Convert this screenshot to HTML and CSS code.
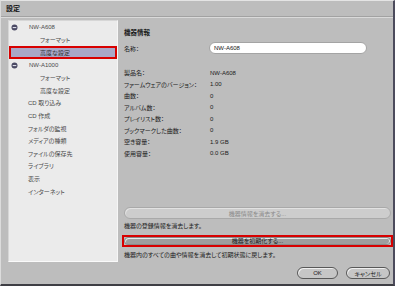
FILE: index.html
```html
<!DOCTYPE html>
<html lang="ja">
<head>
    <meta charset="UTF-8">
    <title>設定</title>
    <link rel="stylesheet" href="styles.css">
</head>
<body>
    <div class="window">
        <div class="titlebar">設定</div>

        <div class="main">
            <ul class="nav">
                <li class="nav-item device">
                    <svg class="toggle" width="7" height="7" viewBox="0 0 7 7"><circle cx="3.5" cy="3.5" r="3" fill="#4b4a64"/><rect x="1.7" y="3" width="3.6" height="1.1" fill="#dcdce8"/></svg>NW-A608
                </li>
                <li class="nav-item sub">フォーマット</li>
                <li class="nav-item sub selected">高度な設定</li>
                <li class="nav-item device">
                    <svg class="toggle" width="7" height="7" viewBox="0 0 7 7"><circle cx="3.5" cy="3.5" r="3" fill="#4b4a64"/><rect x="1.7" y="3" width="3.6" height="1.1" fill="#dcdce8"/></svg>NW-A1000
                </li>
                <li class="nav-item sub">フォーマット</li>
                <li class="nav-item sub">高度な設定</li>
                <li class="nav-item">CD 取り込み</li>
                <li class="nav-item">CD 作成</li>
                <li class="nav-item">フォルダの監視</li>
                <li class="nav-item">メディアの種類</li>
                <li class="nav-item">ファイルの保存先</li>
                <li class="nav-item">ライブラリ</li>
                <li class="nav-item">表示</li>
                <li class="nav-item">インターネット</li>
            </ul>

            <section class="pane">
                <h2 class="pane-title">機器情報</h2>

                <div class="name-row">
                    <span class="label">名称：</span>
                    <div class="field">NW-A608</div>
                </div>

                <dl class="info">
                    <dt>製品名：</dt><dd>NW-A608</dd>
                    <dt>ファームウェアのバージョン：</dt><dd>1.00</dd>
                    <dt>曲数：</dt><dd>0</dd>
                    <dt>アルバム数：</dt><dd>0</dd>
                    <dt>プレイリスト数：</dt><dd>0</dd>
                    <dt>ブックマークした曲数：</dt><dd>0</dd>
                    <dt>空き容量：</dt><dd>1.9 GB</dd>
                    <dt>使用容量：</dt><dd>0.0 GB</dd>
                </dl>

                <div class="actions">
                    <button class="btn wide" disabled>機器情報を消去する...</button>
                    <p class="note first">機器の登録情報を消去します。</p>
                    <div class="highlight">
                        <button class="btn wide dark">機器を初期化する...</button>
                    </div>
                    <p class="note">機器内のすべての曲や情報を消去して初期状態に戻します。</p>
                </div>
            </section>
        </div>

        <div class="footer">
            <button class="btn pill ok">OK</button>
            <button class="btn pill cancel">キャンセル</button>
        </div>
    </div>
</body>
</html>
```

FILE: styles.css
```css
body {
    margin: 0;
    background: #fff;
    font-family: "Liberation Sans", "Noto Sans CJK JP", sans-serif;
    font-size: 6px;
    font-feature-settings: "palt";
    color: #222;
}

.window {
    width: 395px;
    height: 286px;
    box-sizing: border-box;
    background: #bdbdbd;
    border-top: 1px solid #e4e4e4;
    border-left: 1px solid #dcdcdc;
    border-right: 2px solid #4c4b5c;
    border-bottom: 2px solid #3e3e44;
}

.titlebar {
    height: 15px;
    line-height: 15px;
    padding-left: 5px;
    font-size: 7px;
    font-weight: bold;
    color: #111;
    border-bottom: 1px solid #a2a2a2;
    box-shadow: 0 1px 0 #dadada;
}

.main {
    display: flex;
    gap: 6px;
    height: 242px;
    margin-top: 3px;
    padding: 0 2px 0 7px;
}

/* left tree */
.nav {
    width: 110px;
    box-sizing: border-box;
    margin: 0;
    padding: 0;
    list-style: none;
    background: #ebebeb;
    border-top: 1px solid #d6d6d6;
    border-left: 1px solid #d6d6d6;
    border-right: 1px solid #f6f6f6;
    border-bottom: 1px solid #fafafa;
}

.nav-item {
    display: flex;
    align-items: center;
    height: 12.6px;
    box-sizing: border-box;
    padding-left: 19px;
    color: #4a4a4a;
    white-space: nowrap;
}

.nav-item.device {
    padding-left: 2px;
}

.nav-item.sub {
    padding-left: 31px;
}

.toggle {
    margin-right: 11px;
    flex-shrink: 0;
}

.nav-item.selected {
    background: #a9a8c8;
    border: 2px solid #d80000;
    padding-left: 29px;
    color: #333;
}

/* right pane */
.pane {
    flex: 1;
    display: flex;
    flex-direction: column;
}

.pane-title {
    margin: 7px 0 0;
    line-height: 12px;
    font-size: 6.5px;
    font-weight: bold;
    color: #1a1a1a;
}

.name-row {
    display: flex;
    align-items: center;
    height: 12px;
    margin-top: 3px;
}

.label {
    width: 85px;
    color: #1a1a1a;
}

.field {
    width: 158px;
    height: 12px;
    box-sizing: border-box;
    padding-left: 4px;
    line-height: 10px;
    background: #fff;
    border: 1px solid #a4a4a4;
    border-radius: 6px;
    color: #111;
}

.info {
    display: grid;
    grid-template-columns: 86px 1fr;
    grid-auto-rows: 11.5px;
    align-items: center;
    margin: 12.75px 0 0;
}

.info dt,
.info dd {
    margin: 0;
    color: #1a1a1a;
    white-space: nowrap;
}

.actions {
    margin-top: auto;
    padding-bottom: 1px;
}

.btn {
    font-family: inherit;
    font-size: 6px;
    font-feature-settings: "palt";
    padding: 0;
    cursor: pointer;
}

.btn.wide {
    display: block;
    width: 100%;
    height: 12px;
    border-radius: 6px;
    background: #cdcdcd;
    border: 1px solid #a9a9a9;
    box-shadow: inset 1px 1px 0 #e2e2e2;
    color: #8a8a8a;
}

.note {
    margin: 2px 0 0;
    line-height: 12px;
    color: #1a1a1a;
    white-space: nowrap;
}

.note.first {
    margin-top: 1px;
}

.highlight {
    margin: 3px -2px 0;
    border: 2px solid #d80000;
}

.btn.wide.dark {
    height: 8px;
    line-height: 6px;
    background: #9e9e9e;
    border: 1px solid #8a8a8a;
    box-shadow: inset 1px 1px 0 #e8e8e8, inset -1px 0 0 #f0f0f0;
    color: #1a1a1a;
}

.footer {
    display: flex;
    justify-content: flex-end;
    gap: 8px;
    margin-top: 5px;
    padding-right: 3px;
}

.btn.pill {
    height: 12px;
    border-radius: 6px;
    background: #c6c6c6;
    border: 1px solid #585858;
    box-shadow: inset 1px 1px 0 #efefef;
    color: #1a1a1a;
}

.btn.ok {
    width: 41px;
}

.btn.cancel {
    width: 44px;
}
```
